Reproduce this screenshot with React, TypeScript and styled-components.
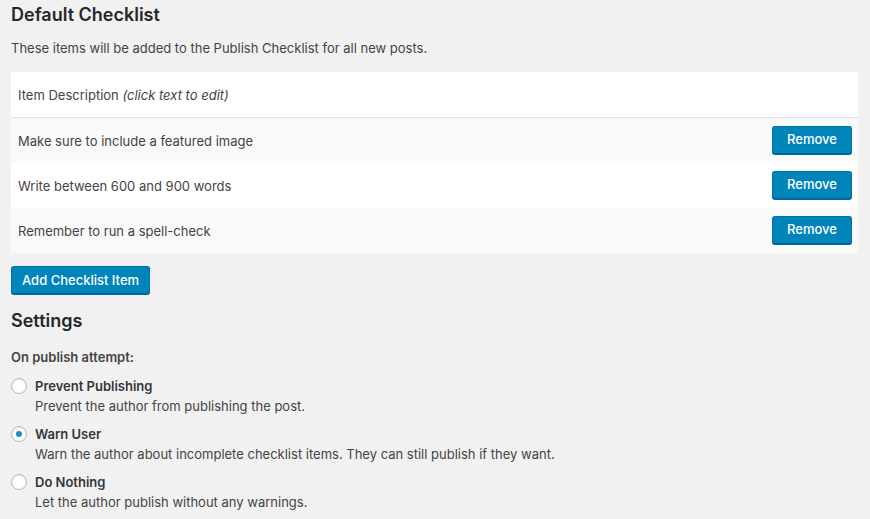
import React, { useState } from 'react';
import styled, { createGlobalStyle } from 'styled-components';

const GlobalStyle = createGlobalStyle`
  html, body {
    margin: 0;
    padding: 0;
    background: #f1f1f1;
  }
  body {
    font-family: Inter, "Noto Sans", "Liberation Sans", sans-serif;
    font-size: 13px;
    color: #444;
  }
  * {
    box-sizing: border-box;
  }
`;

const Page = styled.div`
  padding: 3px 12px 0 11px;
`;

const Heading = styled.h2<{ $top?: number }>`
  margin: ${(p) => p.$top ?? 0}px 0 0;
  font-size: 18px;
  line-height: 23px;
  font-weight: 600;
  color: #23282d;
`;

const Intro = styled.p`
  margin: 12px 0 14px;
  line-height: 20px;
`;

const Table = styled.div`
  display: flex;
  flex-direction: column;
`;

const Row = styled.div<{ $alt?: boolean; $head?: boolean }>`
  display: flex;
  align-items: center;
  justify-content: space-between;
  height: ${(p) => (p.$head ? 46 : 45)}px;
  padding: 0 6px 0 7px;
  background: ${(p) => (p.$alt ? '#f9f9f9' : '#fff')};
  border-bottom: ${(p) => (p.$head ? '1px solid #e1e1e1' : 'none')};
`;

const Cell = styled.span`
  cursor: text;
  line-height: 20px;
`;

const Hint = styled.em`
  font-style: italic;
`;

const Button = styled.button`
  display: inline-flex;
  align-items: center;
  justify-content: center;
  height: 28px;
  padding: 0 10px 1px;
  font-family: inherit;
  font-size: 13px;
  font-weight: 500;
  color: #fff;
  background: #0085ba;
  border: 1px solid #0073aa;
  border-bottom-color: #006799;
  border-radius: 3px;
  box-shadow: 0 1px 0 #006799;
  cursor: pointer;
`;

const RemoveButton = styled(Button)`
  width: 80px;
  margin-top: -2px;
`;

const AddBar = styled.div`
  margin-top: 13px;
`;

const Label = styled.p`
  margin: 15px 0 9px;
  font-weight: 600;
  line-height: 20px;
`;

const Options = styled.div`
  display: flex;
  flex-direction: column;
  gap: 8px;
`;

const Option = styled.label`
  display: grid;
  grid-template-columns: 16px 1fr;
  column-gap: 8px;
  cursor: pointer;
`;

const Radio = styled.span<{ $checked?: boolean }>`
  width: 16px;
  height: 16px;
  margin-top: 2px;
  border-radius: 50%;
  border: 1px solid #b4b9be;
  background: #fff;
  box-shadow: inset 0 1px 2px rgba(0, 0, 0, 0.1);
  display: flex;
  align-items: center;
  justify-content: center;
  &::after {
    content: '';
    width: 6px;
    height: 6px;
    border-radius: 50%;
    background: #1e8cbe;
    display: ${(p) => (p.$checked ? 'block' : 'none')};
  }
`;

const OptionTitle = styled.span`
  font-weight: 600;
  line-height: 20px;
  color: #32373c;
`;

const OptionDesc = styled.span`
  grid-column: 2;
  line-height: 20px;
`;

const items = [
  'Make sure to include a featured image',
  'Write between 600 and 900 words',
  'Remember to run a spell-check',
];

const choices = [
  { id: 'prevent', title: 'Prevent Publishing', desc: 'Prevent the author from publishing the post.' },
  {
    id: 'warn',
    title: 'Warn User',
    desc: 'Warn the author about incomplete checklist items. They can still publish if they want.',
  },
  { id: 'nothing', title: 'Do Nothing', desc: 'Let the author publish without any warnings.' },
];

const App: React.FC = () => {
  const [mode, setMode] = useState('warn');

  return (
    <Page>
      <GlobalStyle />
      <Heading>Default Checklist</Heading>
      <Intro>These items will be added to the Publish Checklist for all new posts.</Intro>
      <Table>
        <Row $head>
          <Cell>
            Item Description <Hint>(click text to edit)</Hint>
          </Cell>
        </Row>
        {items.map((item, i) => (
          <Row key={item} $alt={i % 2 === 0}>
            <Cell>{item}</Cell>
            <RemoveButton>Remove</RemoveButton>
          </Row>
        ))}
      </Table>
      <AddBar>
        <Button>Add Checklist Item</Button>
      </AddBar>
      <Heading $top={15}>Settings</Heading>
      <Label>On publish attempt:</Label>
      <Options>
        {choices.map((c) => (
          <Option key={c.id} onClick={() => setMode(c.id)}>
            <Radio $checked={mode === c.id} />
            <OptionTitle>{c.title}</OptionTitle>
            <OptionDesc>{c.desc}</OptionDesc>
          </Option>
        ))}
      </Options>
    </Page>
  );
};

export default App;
